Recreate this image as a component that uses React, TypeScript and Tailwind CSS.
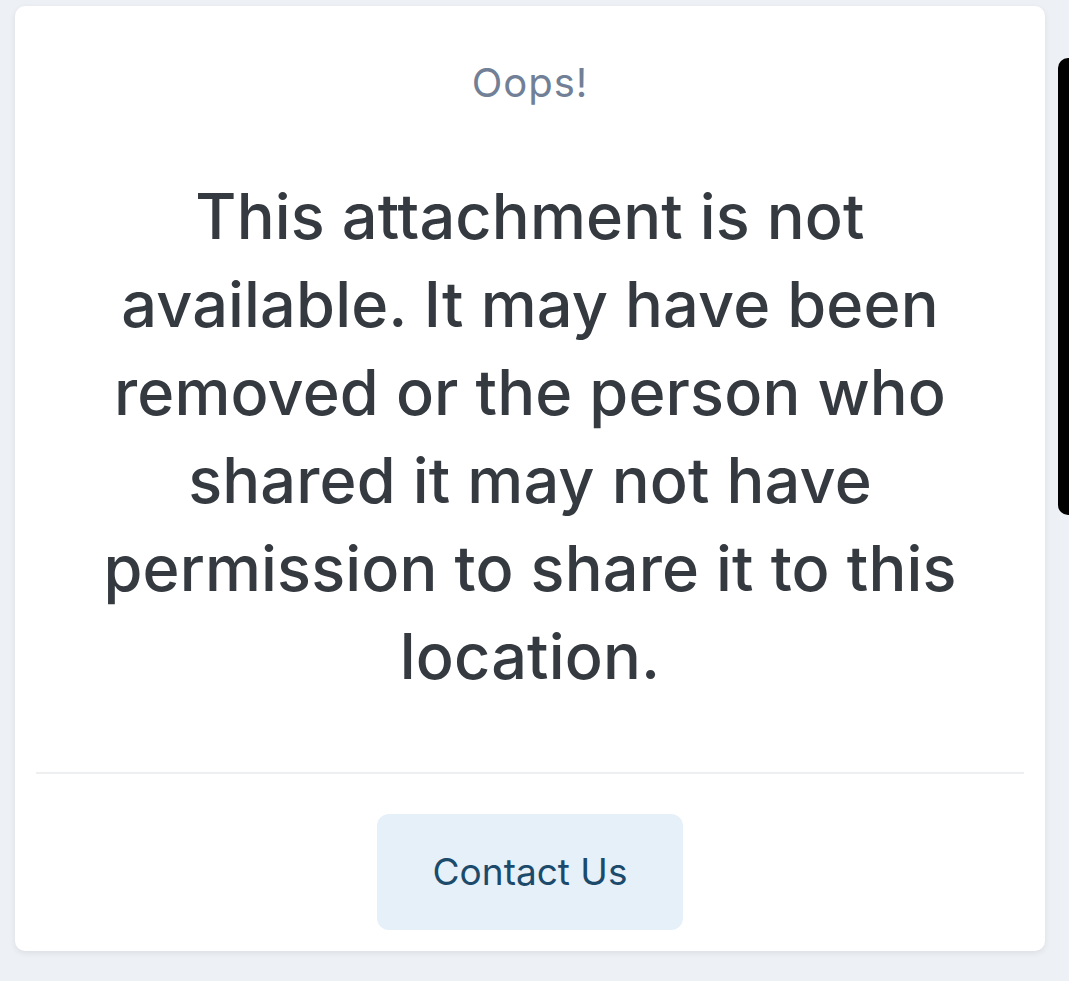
import React from "react";

export default function App() {
  return (
    <div
      className="relative w-[1069px] h-[981px] bg-[#edf0f4] overflow-hidden"
      style={{ fontFamily: "Inter, 'Noto Sans', sans-serif" }}
    >
      <div className="pt-[6px] pl-[15px] pr-[24px]">
        <div className="bg-white rounded-[10px] shadow-[0_2px_6px_rgba(0,0,0,0.08)] px-[21px] pt-[53px] pb-[21px] flex flex-col items-center">
          <div className="text-[40px] leading-[48px] tracking-[1px] text-[#718096]">Oops!</div>
          <div className="mt-[65px] px-[50px] text-center text-[63px] leading-[88px] tracking-[0.15px] font-medium text-[#343a40]">
            This attachment is not available. It may have been removed or the person who shared it may not have permission to share it to this location.
          </div>
          <div className="mt-[72px] w-full h-[2px] bg-[#eeeff1]" />
          <button className="mt-[40px] w-[306px] h-[116px] rounded-[12px] bg-[#e6f0f9] text-[#1b4a6b] text-[37px]">
            Contact Us
          </button>
        </div>
      </div>
      <div className="absolute right-[-10px] top-[58px] w-[21px] h-[457px] rounded-[10px] bg-black" />
    </div>
  );
}
